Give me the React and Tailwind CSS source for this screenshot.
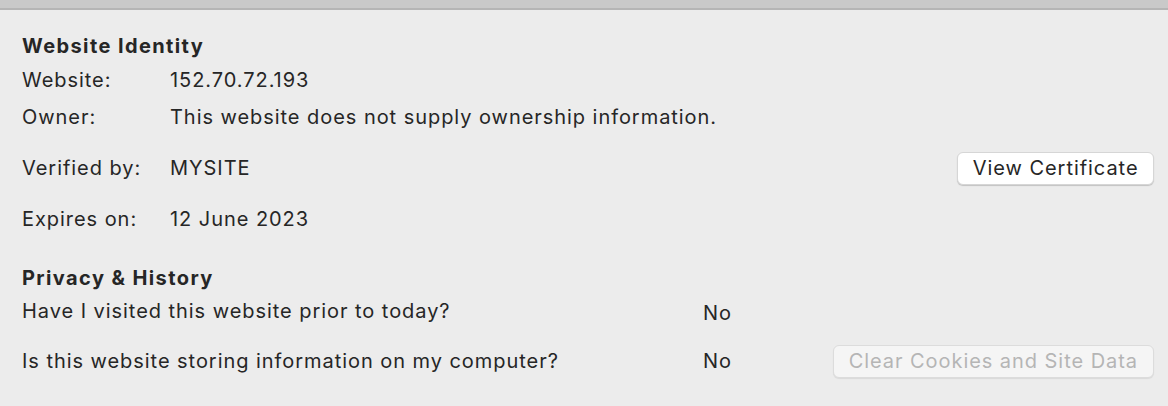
import React from 'react';

const font = { fontFamily: 'Inter, "Noto Sans", sans-serif' };

const Row = ({ label, value, h, children }) => (
    <div className={`flex items-center ${h}`}>
        <div className="w-[148px] shrink-0">{label}</div>
        <div className="flex-1">{value}</div>
        {children}
    </div>
);

export default function App() {
    return (
        <div className="w-[1168px] h-[406px] bg-[#ececec] text-[#262626] text-[20px] tracking-[0.95px] overflow-hidden" style={font}>
            <div className="h-[8px] bg-[#c9c9c9] border-b-2 border-[#b5b5b5] box-content"></div>
            <div className="pl-[22px] pr-[14px]">
                <div className="h-[28px] mt-[22px] flex items-center font-bold tracking-[1.4px]">Website Identity</div>
                <Row label="Website:" value="152.70.72.193" h="h-[39px]" />
                <Row label="Owner:" value="This website does not supply ownership information." h="h-[36px]" />
                <Row label="Verified by:" value="MYSITE" h="h-[66px]">
                    <button className="h-[33px] px-[14.5px] bg-white rounded-[6px] border border-[#d6d6d6] shadow-[0_1px_1px_rgba(0,0,0,0.18)] text-[#262626]">
                        View Certificate
                    </button>
                </Row>
                <Row label="Expires on:" value="12 June 2023" h="h-[36px]" />
                <div className="h-[30px] mt-[26px] flex items-center font-bold tracking-[1.4px]">Privacy &amp; History</div>
                <div className="flex items-center h-[36px]">
                    <div className="w-[681px] shrink-0">Have I visited this website prior to today?</div>
                    <div className="flex-1 pt-[4px]">No</div>
                </div>
                <div className="flex items-center h-[64px]">
                    <div className="w-[681px] shrink-0">Is this website storing information on my computer?</div>
                    <div className="flex-1">No</div>
                    <button className="h-[33px] px-[15px] bg-[#f5f5f5] rounded-[6px] border border-[#dcdcdc] shadow-[0_1px_1px_rgba(0,0,0,0.08)] text-[#b5b5b5]">
                        Clear Cookies and Site Data
                    </button>
                </div>
            </div>
        </div>
    );
}
